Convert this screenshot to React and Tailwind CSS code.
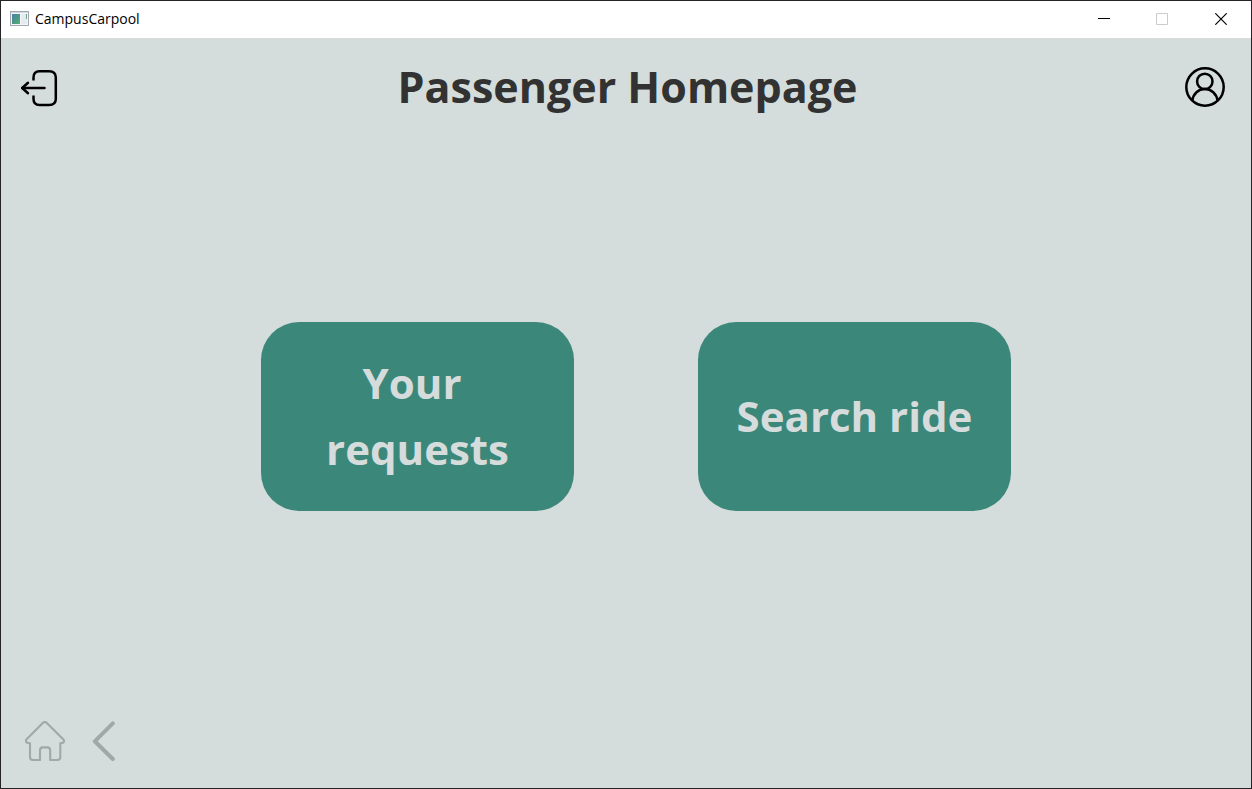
import React from "react";

function AppIcon() {
  return (
    <svg width="19" height="15" viewBox="0 0 19 15" aria-hidden="true">
      <defs>
        <linearGradient id="pane" x1="0" y1="0" x2="1" y2="1">
          <stop offset="0" stopColor="#4a7fb0" />
          <stop offset="0.6" stopColor="#4c9c7e" />
          <stop offset="1" stopColor="#5fae78" />
        </linearGradient>
      </defs>
      <rect x="0.5" y="0.5" width="18" height="14" fill="#f3f5f8" stroke="#a3a9b0" />
      <rect x="1" y="1" width="17" height="1" fill="#d3d9e0" />
      <rect x="2" y="3" width="8" height="10" fill="url(#pane)" />
      <rect x="11" y="3" width="6" height="10" fill="#e6ebf2" />
      <rect x="16" y="3" width="1" height="5" fill="#6fa58c" />
    </svg>
  );
}

function TitleBar() {
  return (
    <div className="flex h-[37px] items-center justify-between bg-white pb-[2px] pl-[9px]">
      <div className="flex items-center gap-[6px]">
        <AppIcon />
        <span className="text-sm text-black">CampusCarpool</span>
      </div>
      <div className="flex h-full">
        <button type="button" aria-label="Minimize" className="flex w-[58px] items-center justify-center">
          <svg width="12" height="12" viewBox="0 0 12 12">
            <path d="M0 5.5H12" stroke="#000" />
          </svg>
        </button>
        <button type="button" aria-label="Maximize" disabled className="flex w-[58px] items-center justify-center">
          <svg width="12" height="12" viewBox="0 0 12 12">
            <path d="M.5 .5H11.5V11.5H.5Z" fill="none" stroke="#ccc" />
          </svg>
        </button>
        <button type="button" aria-label="Close" className="flex w-[60px] items-center justify-center">
          <svg width="12" height="12" viewBox="0 0 12 12">
            <path d="M.3 .3L11.7 11.7M11.7 .3L.3 11.7" stroke="#000" strokeWidth="1.2" />
          </svg>
        </button>
      </div>
    </div>
  );
}

function LogoutIcon() {
  return (
    <svg width="40" height="40" viewBox="0 0 40 40" fill="none" stroke="#000" strokeWidth="2.5" strokeLinecap="butt">
      <path d="M13.5 13.5V10.5Q13.5 4.2 19.5 4.2H29Q35.8 4.2 35.8 10.5V32Q35.8 38 29 38H19.5Q13.5 38 13.5 32V28.5" />
      <path d="M2.2 21H24.5" strokeLinecap="round" />
      <path d="M8 15.8L2.2 21L8 26.2" strokeLinecap="round" strokeLinejoin="round" />
    </svg>
  );
}

function ProfileIcon() {
  return (
    <svg width="40" height="40" viewBox="0 0 40 40" fill="none" stroke="#000" strokeWidth="2.5">
      <circle cx="20" cy="20" r="18.7" />
      <circle cx="19.8" cy="14.4" r="7.7" />
      <path d="M7.3 33.6C8.2 26.6 13.4 22.1 19.8 22.1S31.6 26.6 32.6 33.6" />
    </svg>
  );
}

function HomeIcon() {
  return (
    <svg width="40" height="40" viewBox="0 0 40 40" fill="none" stroke="#a1a8a6" strokeWidth="2.1" strokeLinejoin="round">
      <path d="M18.3 1.6Q19.8 .4 21.3 1.6L38.2 18.2Q39.8 20.4 38.2 21.6Q37.2 22.3 35.3 22.2V36Q35.3 39 32.2 39H25.2V29.5Q25.2 26.4 22.2 26.4H18Q15 26.4 15 29.5V39H8Q5 39 5 36V22.2Q2.8 22.3 1.7 21.4Q.2 19.9 1.6 18.2Z" />
    </svg>
  );
}

function BackIcon() {
  return (
    <svg width="24" height="40" viewBox="0 0 24 40" fill="none" stroke="#a1a8a6" strokeWidth="4" strokeLinecap="round" strokeLinejoin="round">
      <path d="M20.8 2.4L2.8 20.3L20.8 38" />
    </svg>
  );
}

function MenuButton({ children }) {
  return (
    <button
      type="button"
      className="flex h-[189px] w-[313px] items-center justify-center rounded-[38px] bg-[#3b887b] pb-[2px] text-[42px] leading-[66px] font-bold whitespace-pre text-[#d5dcdb]"
    >
      {children}
    </button>
  );
}

export default function App() {
  return (
    <div className="flex min-h-screen flex-col border border-[#252326] bg-[#d4dddb] font-['Open_Sans','Noto_Sans',sans-serif]">
      <TitleBar />
      <header className="flex items-center justify-between pt-[21px] pr-[26px] pl-[19px]">
        <button type="button" aria-label="Log out">
          <LogoutIcon />
        </button>
        <h1 className="pl-[10px] text-[43px] leading-[56px] font-bold text-[#323232]">Passenger Homepage</h1>
        <button type="button" aria-label="Profile">
          <ProfileIcon />
        </button>
      </header>
      <main className="flex flex-1 flex-wrap items-center justify-center gap-[124px] pl-5">
        <MenuButton>{"Your \nrequests"}</MenuButton>
        <MenuButton>Search ride</MenuButton>
      </main>
      <footer className="flex gap-[27px] pt-[3px] pb-[27px] pl-6">
        <button type="button" aria-label="Home" disabled>
          <HomeIcon />
        </button>
        <button type="button" aria-label="Back" disabled>
          <BackIcon />
        </button>
      </footer>
    </div>
  );
}
